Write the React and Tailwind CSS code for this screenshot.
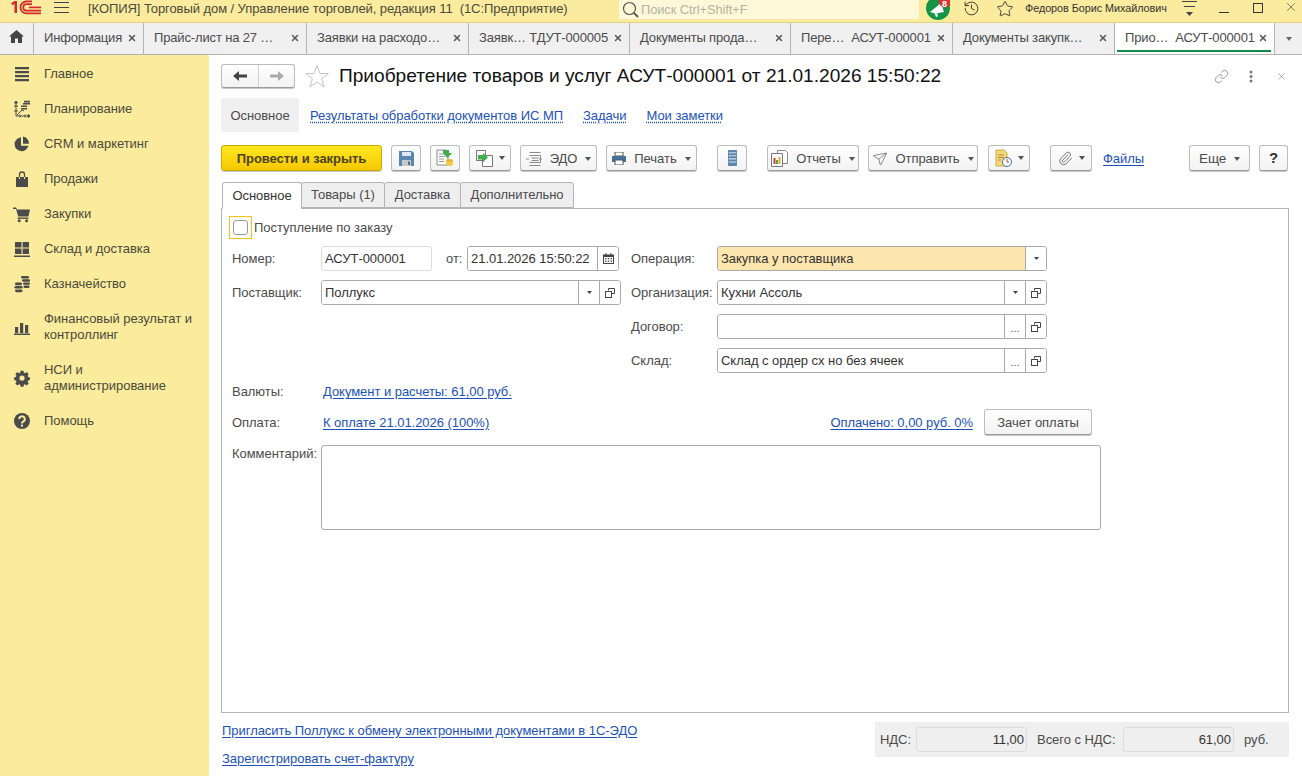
import React from "react";
import { History, Star, X, Link, Paperclip, Send } from "lucide-react";

const Caret = ({ c = "#555", small = false }) => (
  <svg width={small ? 5 : 6} height={small ? 3 : 4} viewBox="0 0 7 4" preserveAspectRatio="none" className="shrink-0"><path d="M0 0h7L3.5 4z" fill={c} /></svg>
);
const CopyIco = () => (
  <svg width="10" height="10" viewBox="0 0 10 10" fill="none" stroke="#444" strokeWidth="1"><path d="M3.500 2.500V.5h6v5h-2.500" /><rect x=".5" y="3.500" width="6" height="6" /></svg>
);

const Logo = () => (
  <svg width="32" height="15" viewBox="0 0 32 15" fill="none" className="shrink-0">
    <path d="M1 3.500 4.500 1H7v12H4.500V3.800L2.400 5.200z" fill="#d7262d" />
    <path d="M31 13.400H16.500a6 6 0 0 1 0-12H22" stroke="#d7262d" strokeWidth="1.700" />
    <path d="M31 10.600H16.500a3.200 3.200 0 0 1 0-6.400H22" stroke="#d7262d" strokeWidth="1.700" />
    <path d="M19 7.400h12" stroke="#d7262d" strokeWidth="1.700" />
  </svg>
);

const sideIcons = {
  main: <path d="M2 2h14v2.200H2zM2 6h14v2.200H2zM2 10h14v2.200H2zM2 14h14v2.200H2z" />,
  plan: (
    <g>
      <path d="M3 1v15h14" fill="none" stroke="#4b4b4b" strokeWidth="1" />
      <path d="M1.500 3 3 1l1.500 2zM15 14.500l2 1.500-2 1.500zM1 6h4M1 11h4M7 14.500v3M12 14.500v3" stroke="#4b4b4b" strokeWidth="1" />
      <path d="M4 15 9 10l2 1" fill="none" stroke="#4b4b4b" strokeWidth="1" />
      <path d="M8 5.500h6v1.600H8zM10 3h7v1.600h-7zM11 .8h6v1.600h-6zM8 8h6v1.600H8z" />
    </g>
  ),
  crm: (
    <g>
      <path d="M8 2.200a7 7 0 1 0 7.400 8.600H8z" />
      <path d="M10 1.500a7 7 0 0 1 6 7.200h-6z" />
    </g>
  ),
  sales: (
    <g>
      <path d="M3 7h3v2h1V7h4v2h1V7h3v10H3z" />
      <path d="M6.500 7V4.500a2.500 2.500 0 0 1 5 0V7" fill="none" stroke="#4b4b4b" strokeWidth="1.300" />
    </g>
  ),
  buy: (
    <g>
      <path d="M0 2.500h3.200l.7 2H17l-1.600 7H5.200L3 4H0z" />
      <path d="M4.600 12.500h10.800v1.400H4.600z" />
      <circle cx="6.200" cy="15.800" r="1.500" />
      <circle cx="13.600" cy="15.800" r="1.500" />
    </g>
  ),
  stock: <path d="M2 2h6.500v5.400H2zM9.600 2H16v5.400H9.600zM2 8.600h6.500V14H2zM9.600 8.600H16V14H9.600zM1 15.400h16V17H1z" />,
  money: (
    <g>
      <rect x="8" y="1" width="8" height="2.600" rx="1.300" />
      <rect x="9" y="4.300" width="8" height="2.400" rx="1.200" />
      <rect x="10" y="7.400" width="7" height="2.400" rx="1.200" />
      <rect x="2" y="7.600" width="7" height="2.600" rx="1.300" />
      <rect x="1.500" y="11" width="8" height="2.600" rx="1.300" />
      <rect x="2" y="14.400" width="7.500" height="2.800" rx="1.400" />
      <rect x="10.500" y="10.600" width="6" height="2.400" rx="1.200" />
    </g>
  ),
  fin: <path d="M2 9h3.200v6H2zM7 5h3.200v10H7zM12 7h3.200v8H12zM1 15.600h16V17H1z" />,
  gear: (
    <path fillRule="evenodd" d="M7.300 1h3.400l.4 2.300 1.300.6 2-1.300 2.300 2.400-1.300 1.900.6 1.300 2 .5v3.300l-2 .4-.6 1.300 1.300 2-2.300 2.300-2-1.300-1.300.6-.4 2.100H7.300l-.4-2.100-1.300-.6-2 1.300-2.300-2.300 1.300-2-.6-1.300-2-.4V8.700l2-.5.6-1.300-1.300-1.900 2.300-2.400 2 1.300 1.300-.6zM9 6.500a3 3 0 1 0 0 6 3 3 0 0 0 0-6z" transform="translate(1.200 .800) scale(.87)" />
  ),
  help: (
    <g>
      <circle cx="9" cy="9" r="8" />
      <path d="M6.200 7a2.800 2.800 0 1 1 4.300 2.400c-1 .6-1.500 1-1.500 2" fill="none" stroke="#fbec9e" strokeWidth="2" />
      <rect x="8" y="12.600" width="2" height="2" fill="#fbec9e" />
    </g>
  ),
};

const sideItems = [
  ["main", ["Главное"]],
  ["plan", ["Планирование"]],
  ["crm", ["CRM и маркетинг"]],
  ["sales", ["Продажи"]],
  ["buy", ["Закупки"]],
  ["stock", ["Склад и доставка"]],
  ["money", ["Казначейство"]],
  ["fin", ["Финансовый результат и", "контроллинг"]],
  ["gear", ["НСИ и", "администрирование"]],
  ["help", ["Помощь"]],
];

const tabs = [
  ["Информация", "w-[110px]"],
  ["Прайс-лист на 27 …", "w-[163px]"],
  ["Заявки на расходо…", "w-[162px]"],
  ["Заявк… ТДУТ-000005", "w-[161px]"],
  ["Документы прода…", "w-[161px]"],
  ["Пере…  АСУТ-000001", "w-[162px]"],
  ["Документы закупк…", "w-[162px]"],
];

const Btn = ({ className = "", children }) => (
  <div className={"h-[26px] shrink-0 flex items-center justify-center rounded-[3px] border border-[#bcbcbc] border-b-[#9a9a9a] bg-gradient-to-b from-white to-[#f3f3f3] shadow-[0_1px_0_#c8c8c8] text-[#4b4b4b] " + className}>
    {children}
  </div>
);

const Field = ({ className = "", value = "", buttons = [], bg = "bg-white" }) => (
  <div className={"h-[25px] flex rounded-[3px] border border-[#a9a9a9] overflow-hidden " + className}>
    <div className={"flex-1 min-w-0 flex items-center pl-[3px] text-[#333] " + bg}>{value}</div>
    {buttons.map((b, i) => (
      <div key={i} className="w-[21px] shrink-0 flex items-center justify-center border-l border-[#a9a9a9] bg-white text-[#555]">
        {b === "c" ? <Caret c="#444" small /> : b === "o" ? <CopyIco /> : b === "d" ? <span className="text-[11px] leading-none mt-[3px]">...</span> : b}
      </div>
    ))}
  </div>
);

const Label = ({ className = "", children }) => <div className={"text-[#4b4b4b] shrink-0 " + className}>{children}</div>;
const A = ({ className = "", children }) => <span className={"text-[#1b51b8] underline underline-offset-2 whitespace-nowrap " + className}>{children}</span>;

const Calendar = () => (
  <svg width="11" height="11" viewBox="0 0 11 11" fill="#444"><path d="M0 1.500h11V11H0zM1 4v6h9V4z" fillRule="evenodd" /><path d="M2.500 0h1v2h-1zM7.500 0h1v2h-1zM2 5h1.500v1.300H2zM4.700 5h1.500v1.300H4.700zM7.500 5H9v1.300H7.500zM2 7.500h1.500v1.300H2zM4.700 7.500h1.500v1.300H4.700zM7.500 7.500H9v1.300H7.500z" /></svg>
);

export default function App() {
  return (
    <div className="w-[1302px] h-[776px] overflow-hidden flex flex-col bg-white font-['Liberation_Sans',Arial,sans-serif] text-[13px] leading-[16px] tracking-[-0.04px]">
      {/* title bar */}
      <div className="h-[23px] shrink-0 bg-[#fbeb9e] border-b border-[#e3d27f] flex items-start">
        <div className="ml-[10px] mt-0"><Logo /></div>
        <svg width="16" height="13" viewBox="0 0 16 13" className="ml-[12px] mt-[1px] shrink-0" stroke="#444" strokeWidth="1"><path d="M0 1.500h15M0 6.500h15M0 11.500h15" /></svg>
        <div className="ml-[18px] w-[531px] shrink-0 text-[#4a4a3a] text-[13px] leading-[17px] whitespace-pre tracking-[-0.07px]">[КОПИЯ] Торговый дом / Управление торговлей, редакция 11  (1С:Предприятие)</div>
        <div className="w-[300px] h-[19px] shrink-0 bg-[#fff8d8] rounded-br-[3px] flex items-center pl-[3px] gap-[2px] text-[#b3b3a5] text-[12.800px] leading-[15px]">
          <svg width="17" height="17" viewBox="0 0 17 17" fill="none" stroke="#555" strokeWidth="1.200"><circle cx="7.500" cy="7.500" r="6" /><path d="m12 12 4 4" strokeWidth="1.800" /></svg>
          <span>Поиск Ctrl+Shift+F</span>
        </div>
        <div className="ml-[7px] relative w-[24px] h-[22px] shrink-0">
          <svg width="24" height="22" viewBox="0 0 24 22"><circle cx="12" cy="8" r="12" fill="#159447" /><path d="M4 12 15 3l3 9-7 1.200 1 3-2 .8-1.200-3.400z" fill="#fff" /><circle cx="19" cy="1" r="6.500" fill="#d8322f" /></svg>
          <span className="absolute left-[16px] top-0 text-white font-bold text-[9px] leading-[9px]">8</span>
        </div>
        <History size={17} strokeWidth={1.300} color="#333" className="ml-[13px] shrink-0" />
        <Star size={18} strokeWidth={1.200} color="#333" className="ml-[16px] shrink-0" />
        <div className="ml-[11px] w-[148px] shrink-0 text-[10.800px] leading-[16px] text-[#333]">Федоров Борис Михайлович</div>
        <svg width="16" height="17" viewBox="0 0 16 17" className="ml-[9px] shrink-0"><path d="M0 1.500h15M2 6.500h11" stroke="#444" /><path d="M4 12h7l-3.500 4z" fill="#444" /></svg>
        <div className="ml-[21px] mt-[12px] w-[10px] h-px bg-[#333] shrink-0" />
        <div className="ml-[24px] mt-[3px] w-[10px] h-[10px] border border-[#333] shrink-0" />
        <X size={14} strokeWidth={1} color="#333" className="ml-[21px] shrink-0" />
      </div>
      {/* tabs */}
      <div className="h-[32px] shrink-0 bg-[#f0f0f0] border-b border-[#b4b4b4] flex tracking-[-0.15px]">
        <div className="w-[34px] shrink-0 border-r border-[#b4b4b4] flex items-center justify-center pb-[4px]">
          <svg width="15" height="13" viewBox="0 0 15 13" fill="#444"><path d="M7.500 0 15 6.500h-2V13H9V8.500H6V13H2V6.500H0z" /></svg>
        </div>
        {tabs.map(([t, w]) => (
          <div key={t} className={w + " shrink-0 border-r border-[#b4b4b4] flex items-center justify-between pl-[10px] pr-[6px] pb-[2px] text-[#4b4b4b] whitespace-pre"}>
            <span>{t}</span>
            <X size={10} strokeWidth={3.500} color="#555" />
          </div>
        ))}
        <div className="w-[160px] shrink-0 relative bg-white flex items-center justify-between pl-[10px] pr-[6px] pb-[2px] text-[#4b4b4b] whitespace-pre border-r border-[#b4b4b4]">
          <span>Прио…  АСУТ-000001</span>
          <X size={10} strokeWidth={3.500} color="#555" />
          <div className="absolute left-[2px] right-[3px] bottom-[2px] h-[2px] bg-[#13884a]" />
        </div>
        <div className="flex-1 flex items-center justify-center"><Caret c="#666" /></div>
      </div>
      <div className="flex-1 flex min-h-0">
        {/* sidebar */}
        <div className="w-[209px] shrink-0 bg-[#fbec9d] pt-px">
          {sideItems.map(([ic, lines]) => (
            <div key={ic} className={(lines.length > 1 ? "h-[51px]" : "h-[35px]") + " flex items-center"}>
              <svg width="18" height="18" viewBox="0 0 18 18" fill="#4b4b4b" className="ml-[13px] shrink-0">{sideIcons[ic]}</svg>
              <div className="ml-[13px] text-[#4a4a3a] leading-[16px]">
                {lines.map((l) => <div key={l}>{l}</div>)}
              </div>
            </div>
          ))}
        </div>
        {/* main */}
        <div className="flex-1 min-w-0 pl-[12px] pr-[13px] pt-[9px] flex flex-col">
          <div className="h-[24px] flex items-center">
            <div className="w-[74px] h-[24px] flex rounded-[3px] border border-[#bcbcbc] border-b-[#9a9a9a] bg-gradient-to-b from-white to-[#f3f3f3] shadow-[0_1px_0_#c8c8c8]">
              <div className="w-[37px] border-r border-[#d0d0d0] flex items-center justify-center">
                <svg width="14" height="10" viewBox="0 0 14 10" fill="#444"><path d="M0 5 6 0v3.500h8v3H6V10z" /></svg>
              </div>
              <div className="flex-1 flex items-center justify-center">
                <svg width="14" height="10" viewBox="0 0 14 10" fill="#aaa"><path d="M14 5 8 0v3.500H0v3h8V10z" /></svg>
              </div>
            </div>
            <svg width="24" height="24" viewBox="0 0 24 24" fill="none" stroke="#c4c4c4" strokeWidth="1" className="ml-[10px] shrink-0"><path d="m12 1.500 3 8h8.300l-6.700 5.200 2.500 8.300L12 18l-7.100 5 2.500-8.300L.7 9.500H9z" /></svg>
            <div className="ml-[10px] text-[19.130px] leading-[24px] tracking-normal text-[#111] whitespace-nowrap">Приобретение товаров и услуг АСУТ-000001 от 21.01.2026 15:50:22</div>
            <Link size={15} strokeWidth={1.200} color="#777" className="ml-auto mr-[20px]" />
            <svg width="4" height="13" viewBox="0 0 4 13" fill="#777" className="mr-[23px]"><circle cx="2" cy="2" r="1.500" /><circle cx="2" cy="6.500" r="1.500" /><circle cx="2" cy="11" r="1.500" /></svg>
            <X size={11} strokeWidth={1.200} color="#777" className="mr-[2px]" />
          </div>
          <div className="mt-[10px] h-[34px] flex items-center">
            <div className="w-[78px] h-[34px] pt-px rounded-[3px] bg-[#f0f0f0] flex items-center justify-center text-[#4b4b4b]">Основное</div>
            <span className="ml-[11px] pt-px text-[#1b51b8] underline decoration-dotted underline-offset-2">Результаты обработки документов ИС МП</span>
            <span className="ml-[20px] pt-px text-[#1b51b8] underline decoration-dotted underline-offset-2">Задачи</span>
            <span className="ml-[20px] pt-px text-[#1b51b8] underline decoration-dotted underline-offset-2">Мои заметки</span>
          </div>
          {/* toolbar */}
          <div className="mt-[13px] h-[26px] flex items-center">
            <div className="w-[161px] h-[26px] pt-px shrink-0 rounded-[3px] border border-[#c9ab00] bg-gradient-to-b from-[#ffe71e] to-[#f6c800] shadow-[0_1px_0_#c8c8c8] flex items-center justify-center font-bold text-[#4a4320]">Провести и закрыть</div>
            <Btn className="ml-[9px] w-[30px]">
              <svg width="15" height="15" viewBox="0 0 15 15"><path d="M0 0h13l2 2v13H0z" fill="#5d86ae" /><path d="M3 1h9v4H3z" fill="#dfe8f0" /><path d="M3 9h9v6H3z" fill="#c5c9cc" /><path d="M9 10.500h2V14H9z" fill="#5d6b78" /></svg>
            </Btn>
            <Btn className="ml-[9px] w-[30px]">
              <svg width="18" height="18" viewBox="0 0 18 18"><path d="M1 1h9l2 2v13H1z" fill="#fff" stroke="#8a8a8a" /><path d="M3 5h6M3 7.500h6M3 10h5M3 12.500h5" stroke="#9a9a9a" /><path d="M7 1h6v3h3l-4.500 5L7 4z" fill="#3fae4a" /><ellipse cx="13.500" cy="11.500" rx="3.500" ry="1.500" fill="#e8b92c" /><path d="M10 11.500v4c0 .8 1.600 1.500 3.500 1.500s3.500-.7 3.500-1.500v-4c0 .8-1.600 1.500-3.500 1.500S10 12.300 10 11.500z" fill="#f0cb4d" /></svg>
            </Btn>
            <Btn className="ml-[9px] w-[42px] gap-[6px]">
              <svg width="17" height="17" viewBox="0 0 17 17"><path d="M.5.500h9v10h-9z" fill="#fff" stroke="#777" /><path d="M6.500 5.500h10v11h-10z" fill="#fff" stroke="#777" /><path d="M2 5h5V3l5 4.500L7 12v-2.500H2z" fill="#3fae4a" /></svg>
              <Caret />
            </Btn>
            <Btn className="ml-[9px] w-[77px] pt-px gap-[8px]">
              <svg width="16" height="14" viewBox="0 0 16 14" fill="none" stroke="#8a8a8a"><path d="M3.500.500h11M3.500 3.500h11v7h-11M5.500 6h7M5.500 8.500h7M3.500 13.500h11M0 7h3M13 7h3" /></svg>
              <span>ЭДО</span><Caret />
            </Btn>
            <Btn className="ml-[9px] w-[91px] pt-px gap-[8px]">
              <svg width="14" height="13" viewBox="0 0 14 13"><path d="M3 0h8v4H3z" fill="#fff" stroke="#555" /><path d="M0 4h14v6H0z" fill="#45719c" /><path d="M3 8h8v5H3z" fill="#fff" stroke="#555" /></svg>
              <span>Печать</span><Caret />
            </Btn>
            <Btn className="ml-[20px] w-[30px]">
              <svg width="9" height="16" viewBox="0 0 10 18"><path d="M0 0h10v18H0z" fill="#5d86ae" /><path d="M1 3h8M1 6.500h8M1 10h8M1 13.500h8" stroke="#cfdde9" strokeWidth="1.200" /></svg>
            </Btn>
            <Btn className="ml-[20px] w-[92px] pt-px gap-[8px]">
              <svg width="17" height="17" viewBox="0 0 17 17"><path d="M6.500.500h8l2 2v11h-10z" fill="#fff" stroke="#888" /><path d="M.5 3.500h11v13H.5z" fill="#fff" stroke="#777" /><path d="M2.500 8h2v6h-2z" fill="#d43b32" /><path d="M5 10h2v4H5z" fill="#3fae4a" /><path d="M7.500 7h2v7h-2z" fill="#e1a92c" /></svg>
              <span>Отчеты</span><Caret />
            </Btn>
            <Btn className="ml-[9px] w-[110px] pt-px gap-[8px]">
              <Send size={15} strokeWidth={1} color="#555" className="rotate-[8deg]" />
              <span>Отправить</span><Caret />
            </Btn>
            <Btn className="ml-[10px] w-[42px] gap-[6px]">
              <svg width="17" height="18" viewBox="0 0 17 18"><path d="M1 1h8l3 3v13H1z" fill="#f5d77c" stroke="#d3ab42" /><path d="M3 6h6M3 8.500h6M3 11h3" stroke="#b18c2d" /><circle cx="12" cy="13" r="4.500" fill="#fff" stroke="#3f76b4" /><path d="M12 10v3h2" stroke="#d43b32" fill="none" /></svg>
              <Caret />
            </Btn>
            <Btn className="ml-[20px] w-[42px] gap-[6px]">
              <Paperclip size={15} strokeWidth={1.600} color="#777" />
              <Caret />
            </Btn>
            <A className="ml-[11px] pt-px">Файлы</A>
            <Btn className="ml-[45px] w-[61px] pt-px gap-[8px] text-[13.500px]"><span>Еще</span><Caret /></Btn>
            <Btn className="ml-[9px] w-[29px] font-bold text-[#333] text-[15px]">?</Btn>
          </div>
          {/* form tabs */}
          <div className="mt-[11px] h-[27px] flex pl-px relative z-10 -mb-px text-[#4b4b4b]">
            <div className="w-[80px] h-[27px] rounded-t-[3px] border border-[#b4b4b4] border-b-white bg-white flex items-center justify-center text-[#333]">Основное</div>
            {[["Товары (1)", "w-[84px]"], ["Доставка", "w-[77px]"], ["Дополнительно", "w-[114px]"]].map(([t, w]) => (
              <div key={t} className={w + " h-[26px] -ml-px rounded-t-[3px] border border-[#b4b4b4] bg-[#eeeeee] flex items-center justify-center"}>{t}</div>
            ))}
          </div>
          {/* form */}
          <div className="h-[505px] shrink-0 border border-[#b4b4b4] pl-[7px] pt-[7px] text-[#4b4b4b]">
            <div className="flex items-center h-[23px]">
              <div className="w-[23px] h-[23px] shrink-0 border border-[#f2c21a] flex items-center justify-center">
                <div className="w-[15px] h-[15px] rounded-[3px] border border-[#9a9a9a] bg-white" />
              </div>
              <span className="ml-[2px]">Поступление по заказу</span>
            </div>
            <div className="mt-[7px] pl-[3px] flex">
              <div className="w-[399px] shrink-0">
                <div className="flex items-center h-[25px]">
                  <Label className="w-[89px]">Номер:</Label>
                  <div className="w-[111px] h-[25px] shrink-0 rounded-[3px] border border-[#dcdcdc] flex items-center pl-[3px] text-[#333]">АСУТ-000001</div>
                  <Label className="ml-[14px] w-[21px]">от:</Label>
                  <Field className="w-[152px]" value="21.01.2026 15:50:22" buttons={[<Calendar key="c" />]} />
                </div>
                <div className="flex items-center h-[25px] mt-[9px]">
                  <Label className="w-[89px]">Поставщик:</Label>
                  <Field className="w-[300px]" value="Поллукс" buttons={["c", "o"]} />
                </div>
              </div>
              <div>
                {[
                  ["Операция:", "Закупка у поставщика", ["c"], "bg-[#fde5ae]"],
                  ["Организация:", "Кухни Ассоль", ["c", "o"], "bg-white"],
                  ["Договор:", "", ["d", "o"], "bg-white"],
                  ["Склад:", "Склад с ордер сх но без ячеек", ["d", "o"], "bg-white"],
                ].map(([l, v, b, bg], i) => (
                  <div key={l} className={"flex items-center h-[25px] " + (i ? "mt-[9px]" : "")}>
                    <Label className="w-[86px]">{l}</Label>
                    <Field className="w-[330px]" value={v} buttons={b} bg={bg} />
                  </div>
                ))}
              </div>
            </div>
            <div className="mt-[8px] pl-[3px] h-[20px] pt-[2px] flex items-center">
              <Label className="w-[91px]">Валюты:</Label>
              <A>Документ и расчеты: 61,00 руб.</A>
            </div>
            <div className="mt-[8px] pl-[3px] w-[863px] h-[26px] flex items-center">
              <Label className="w-[91px] pt-[2px]">Оплата:</Label>
              <A className="pt-[2px]">К оплате 21.01.2026 (100%)</A>
              <A className="ml-auto pt-[2px]">Оплачено: 0,00 руб. 0%</A>
              <Btn className="ml-[11px] w-[108px] pt-px">Зачет оплаты</Btn>
            </div>
            <div className="mt-[10px] pl-[3px] flex items-start">
              <Label className="w-[89px] mt-[1px]">Комментарий:</Label>
              <div className="w-[780px] h-[85px] rounded-[3px] border border-[#a9a9a9] bg-white" />
            </div>
          </div>
          {/* footer */}
          <div className="flex items-start">
            <div className="pl-px">
              <div className="mt-[10px]"><A>Пригласить Поллукс к обмену электронными документами в 1С-ЭДО</A></div>
              <div className="mt-[12px]"><A>Зарегистрировать счет-фактуру</A></div>
            </div>
            <div className="ml-auto mt-[9px] w-[414px] h-[35px] bg-[#efefef] flex items-center pl-[5px] text-[#4b4b4b]">
              <span className="w-[36px] shrink-0">НДС:</span>
              <div className="w-[111px] h-[25px] shrink-0 rounded-[3px] border border-[#dcdcdc] flex items-center justify-end pr-[2px] text-[#333]">11,00</div>
              <span className="ml-[10px] w-[86px] shrink-0 whitespace-nowrap">Всего с НДС:</span>
              <div className="w-[111px] h-[25px] shrink-0 rounded-[3px] border border-[#dcdcdc] flex items-center justify-end pr-[2px] text-[#333]">61,00</div>
              <span className="ml-[10px]">руб.</span>
            </div>
          </div>
        </div>
      </div>
    </div>
  );
}
